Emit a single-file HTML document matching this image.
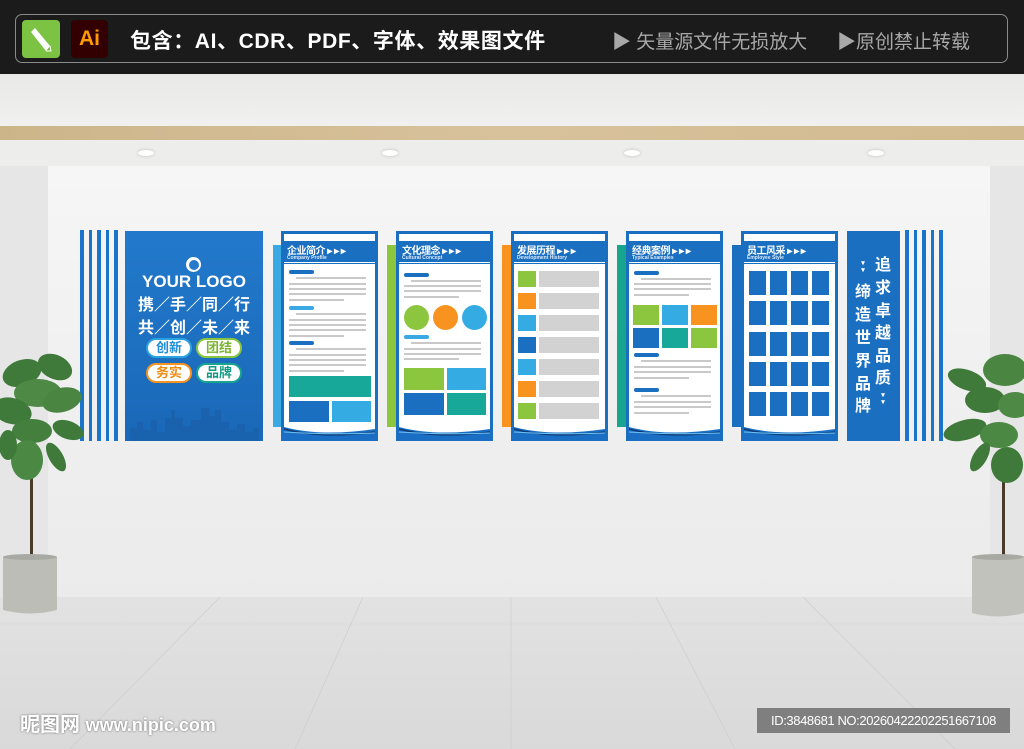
<!DOCTYPE html>
<html><head><meta charset="utf-8"><style>
*{margin:0;padding:0;box-sizing:border-box}
body{width:1024px;height:749px;position:relative;overflow:hidden;background:#ececea;font-family:"Liberation Sans","Noto Sans CJK SC",sans-serif}
.a{position:absolute}
.pn{position:absolute;top:231px;width:97px;height:210px;background:#1b6fc1}
.pn .ts{position:absolute;left:3px;right:3px;top:3px;height:7px;background:#fff}
.pn .hd{position:absolute;left:6px;top:11px;color:#fff;font-weight:bold;font-size:10px;letter-spacing:-0.5px;white-space:nowrap}
.pn .sb{position:absolute;left:6px;top:24px;color:#dfeaf6;font-size:5px;font-weight:bold;white-space:nowrap}
.pn .ct{position:absolute;left:3px;right:3px;top:33px;height:175px;background:#fff;overflow:hidden}
.pn .ln{position:absolute;top:31px;left:3px;right:3px;height:1px;background:#fff}
.g{position:absolute;height:2px;background:#c9c9c9}
.pl{position:absolute;height:4px;border-radius:2px}
.wv{position:absolute;left:0;right:0;bottom:0;height:18px}
.st{position:absolute;top:230px;width:3.5px;height:211px;background:#1b74cc}
.pill{position:absolute;width:46px;height:20px;border-radius:10px;background:#fff;font-size:13px;font-weight:bold;text-align:center;line-height:16px;border:2px solid}
.ch{position:absolute;color:#fff;font-size:16px;font-weight:bold;width:20px;text-align:center;line-height:16px}
</style></head><body>
<!-- top bar -->
<div class="a" style="left:0;top:0;width:1024px;height:74px;background:#1b1b1b"></div>
<div class="a" style="left:15px;top:14px;width:993px;height:49px;border:1.5px solid #8a8a8a;border-radius:7px"></div>
<div class="a" style="left:22px;top:20px;width:38px;height:38px;background:#7cc243;border-radius:4px"></div>
<svg class="a" style="left:22px;top:20px" width="38" height="38"><path d="M9 12 L24 31 L29 31 L28 26 L13 8 Z" fill="#fff"/><path d="M24 31 L29 31 L28 26" fill="#7cc243" stroke="#fff" stroke-width="1"/></svg>
<div class="a" style="left:71px;top:20px;width:37px;height:38px;background:#320000;border-radius:4px;color:#ff9a00;font-size:21px;font-weight:bold;text-align:center;line-height:38px">Ai</div>
<div class="a" style="left:130px;top:25px;color:#fff;font-size:21px;font-weight:bold;white-space:nowrap;letter-spacing:0.6px">包含：AI、CDR、PDF、字体、效果图文件</div>
<div class="a" style="left:612px;top:27px;color:#a8a8a8;font-size:19px;white-space:nowrap">▶ 矢量源文件无损放大</div>
<div class="a" style="left:837px;top:27px;color:#a8a8a8;font-size:19px;white-space:nowrap">▶原创禁止转载</div>
<!-- ceiling -->
<div class="a" style="left:0;top:74px;width:1024px;height:52px;background:linear-gradient(#e9e9e7,#f0f0ee)"></div>
<div class="a" style="left:0;top:126px;width:1024px;height:14px;background:linear-gradient(90deg,#cdb58a,#d8c29c 50%,#d2ba90)"></div>
<div class="a" style="left:0;top:140px;width:1024px;height:26px;background:#ededeb"></div>
<div class="a" style="left:138px;top:150px;width:16px;height:6px;border-radius:50%;background:#fff;box-shadow:0 0 3px #bbb"></div>
<div class="a" style="left:382px;top:150px;width:16px;height:6px;border-radius:50%;background:#fff;box-shadow:0 0 3px #bbb"></div>
<div class="a" style="left:624px;top:150px;width:16px;height:6px;border-radius:50%;background:#fff;box-shadow:0 0 3px #bbb"></div>
<div class="a" style="left:868px;top:150px;width:16px;height:6px;border-radius:50%;background:#fff;box-shadow:0 0 3px #bbb"></div>
<!-- walls -->
<div class="a" style="left:0;top:166px;width:48px;height:432px;background:#e6e6e6"></div>
<div class="a" style="left:990px;top:166px;width:34px;height:432px;background:#e6e6e6"></div>
<div class="a" style="left:48px;top:166px;width:942px;height:432px;background:linear-gradient(#f6f6f6,#f0f0f0 50%,#ebebeb)"></div>
<!-- floor -->
<div class="a" style="left:0;top:597px;width:1024px;height:152px;background:linear-gradient(#e2e2e2,#d9d9d9)"></div>
<svg class="a" style="left:0;top:597px" width="1024" height="152"><g stroke="#cbcbcb" stroke-width="0.6" fill="none"><path d="M220 0 L70 152"/><path d="M363 0 L295 152"/><path d="M511 0 L511 152"/><path d="M656 0 L735 152"/><path d="M803 0 L955 152"/><path d="M0 27 L1024 27" stroke="#d6d6d6"/></g></svg>
<!-- left stripes -->
<div class="st" style="left:80px"></div><div class="st" style="left:88.5px"></div><div class="st" style="left:97px"></div><div class="st" style="left:105.5px"></div><div class="st" style="left:114px"></div>
<!-- logo panel -->
<div class="a" style="left:125px;top:231px;width:138px;height:210px;background:linear-gradient(#2279cb,#1a68b8)"></div>
<svg class="a" style="left:125px;top:380px" width="138" height="61"><path d="M5 61 V48 H12 V42 H18 V50 H26 V40 H32 V52 H40 V38 H46 V30 H50 V38 H58 V46 H66 V40 H76 V28 H84 V36 H90 V30 H96 V42 H104 V50 H112 V44 H120 V52 H128 V48 H134 V61Z" fill="#1a5fa8" opacity=".7"/></svg>
<div class="a" style="left:186px;top:257px;width:15px;height:15px;border-radius:50%;background:#fff"></div>
<div class="a" style="left:188.5px;top:259.5px;width:10px;height:10px;border-radius:50%;background:#2a7acb"></div>
<div class="a" style="left:125px;top:272px;width:138px;text-align:center;color:#fff;font-size:17px;font-weight:bold">YOUR LOGO</div>
<div class="a" style="left:125px;top:291px;width:138px;text-align:center;color:#fff;font-size:16px;font-weight:bold;white-space:nowrap">携／手／同／行</div>
<div class="a" style="left:125px;top:314px;width:138px;text-align:center;color:#fff;font-size:16px;font-weight:bold;white-space:nowrap">共／创／未／来</div>
<div class="pill" style="left:146px;top:338px;border-color:#2aa3e0;color:#1f8dd6">创新</div>
<div class="pill" style="left:196px;top:338px;border-color:#8cc63f;color:#7ab530">团结</div>
<div class="pill" style="left:146px;top:363px;border-color:#f7931e;color:#f08a10">务实</div>
<div class="pill" style="left:196px;top:363px;border-color:#17a58e;color:#139a83">品牌</div>
<!-- side accents -->
<div class="a" style="left:273px;top:245px;width:9px;height:182px;background:#3aa9e3"></div>
<div class="a" style="left:387px;top:245px;width:9px;height:182px;background:#8cc63f"></div>
<div class="a" style="left:502px;top:245px;width:9px;height:182px;background:#f7931e"></div>
<div class="a" style="left:617px;top:245px;width:9px;height:182px;background:#17a58e"></div>
<div class="a" style="left:732px;top:245px;width:9px;height:182px;background:#1b6fc1"></div>

<!-- panel 1 -->
<div class="pn" style="left:281px"><div class="ts"></div><div class="hd">企业简介 ▸ ▸ ▸</div><div class="sb">Company Profile</div><div class="ln"></div>
<div class="ct">
<div class="pl" style="left:5px;top:6px;width:25px;background:#1b6fc1"></div>
<div class="g" style="left:12px;top:13px;width:70px"></div><div class="g" style="left:5px;top:19px;width:77px"></div><div class="g" style="left:5px;top:24px;width:77px"></div><div class="g" style="left:5px;top:29px;width:77px"></div><div class="g" style="left:5px;top:35px;width:55px"></div>
<div class="pl" style="left:5px;top:42px;width:25px;background:#3aa9e3"></div>
<div class="g" style="left:12px;top:49px;width:70px"></div><div class="g" style="left:5px;top:55px;width:77px"></div><div class="g" style="left:5px;top:60px;width:77px"></div><div class="g" style="left:5px;top:65px;width:77px"></div><div class="g" style="left:5px;top:71px;width:55px"></div>
<div class="pl" style="left:5px;top:77px;width:25px;background:#1b6fc1"></div>
<div class="g" style="left:12px;top:84px;width:70px"></div><div class="g" style="left:5px;top:90px;width:77px"></div><div class="g" style="left:5px;top:95px;width:77px"></div><div class="g" style="left:5px;top:100px;width:77px"></div><div class="g" style="left:5px;top:106px;width:55px"></div>
<div class="a" style="left:5px;top:112px;width:82px;height:21px;background:#17a89a"></div>
<div class="a" style="left:5px;top:137px;width:40px;height:21px;background:#1b6fc1"></div>
<div class="a" style="left:48px;top:137px;width:39px;height:21px;background:#35abe3"></div>
</div><svg class="wv" viewBox="0 0 97 18" preserveAspectRatio="none"><path d="M3 4 Q40 14 94 6 V18 H3Z" fill="#1a6fc4"/><path d="M3 6 Q40 16 94 9" stroke="#0d3b78" stroke-width="1.5" fill="none"/><path d="M3 9 Q50 12 94 10" stroke="#6fc1f0" stroke-width="1" fill="none"/></svg></div>

<!-- panel 2 -->
<div class="pn" style="left:396px"><div class="ts"></div><div class="hd">文化理念 ▸ ▸ ▸</div><div class="sb">Cultural Concept</div><div class="ln"></div>
<div class="ct">
<div class="pl" style="left:5px;top:9px;width:25px;background:#1b6fc1"></div>
<div class="g" style="left:12px;top:16px;width:70px"></div><div class="g" style="left:5px;top:21px;width:77px"></div><div class="g" style="left:5px;top:26px;width:77px"></div><div class="g" style="left:5px;top:32px;width:55px"></div>
<div class="a" style="left:5px;top:41px;width:25px;height:25px;border-radius:50%;background:#8cc63f"></div>
<div class="a" style="left:34px;top:41px;width:25px;height:25px;border-radius:50%;background:#f7931e"></div>
<div class="a" style="left:63px;top:41px;width:25px;height:25px;border-radius:50%;background:#35abe3"></div>
<div class="pl" style="left:5px;top:71px;width:25px;background:#3aa9e3"></div>
<div class="g" style="left:12px;top:78px;width:70px"></div><div class="g" style="left:5px;top:84px;width:77px"></div><div class="g" style="left:5px;top:89px;width:77px"></div><div class="g" style="left:5px;top:94px;width:55px"></div>
<div class="a" style="left:5px;top:104px;width:40px;height:22px;background:#8cc63f"></div>
<div class="a" style="left:48px;top:104px;width:39px;height:22px;background:#35abe3"></div>
<div class="a" style="left:5px;top:129px;width:40px;height:22px;background:#1b6fc1"></div>
<div class="a" style="left:48px;top:129px;width:39px;height:22px;background:#17a89a"></div>
</div><svg class="wv" viewBox="0 0 97 18" preserveAspectRatio="none"><path d="M3 4 Q40 14 94 6 V18 H3Z" fill="#1a6fc4"/><path d="M3 6 Q40 16 94 9" stroke="#0d3b78" stroke-width="1.5" fill="none"/><path d="M3 9 Q50 12 94 10" stroke="#6fc1f0" stroke-width="1" fill="none"/></svg></div>

<!-- panel 3 -->
<div class="pn" style="left:511px"><div class="ts"></div><div class="hd">发展历程 ▸ ▸ ▸</div><div class="sb">Development History</div><div class="ln"></div>
<div class="ct">
<div class="a" style="left:4px;top:7px;width:18px;height:16px;background:#8cc63f"></div><div class="a" style="left:25px;top:7px;width:60px;height:16px;background:#d2d2d2"></div>
<div class="a" style="left:4px;top:29px;width:18px;height:16px;background:#f7931e"></div><div class="a" style="left:25px;top:29px;width:60px;height:16px;background:#d2d2d2"></div>
<div class="a" style="left:4px;top:51px;width:18px;height:16px;background:#35abe3"></div><div class="a" style="left:25px;top:51px;width:60px;height:16px;background:#d2d2d2"></div>
<div class="a" style="left:4px;top:73px;width:18px;height:16px;background:#1b6fc1"></div><div class="a" style="left:25px;top:73px;width:60px;height:16px;background:#d2d2d2"></div>
<div class="a" style="left:4px;top:95px;width:18px;height:16px;background:#35abe3"></div><div class="a" style="left:25px;top:95px;width:60px;height:16px;background:#d2d2d2"></div>
<div class="a" style="left:4px;top:117px;width:18px;height:16px;background:#f7931e"></div><div class="a" style="left:25px;top:117px;width:60px;height:16px;background:#d2d2d2"></div>
<div class="a" style="left:4px;top:139px;width:18px;height:16px;background:#8cc63f"></div><div class="a" style="left:25px;top:139px;width:60px;height:16px;background:#d2d2d2"></div>
</div><svg class="wv" viewBox="0 0 97 18" preserveAspectRatio="none"><path d="M3 4 Q40 14 94 6 V18 H3Z" fill="#1a6fc4"/><path d="M3 6 Q40 16 94 9" stroke="#0d3b78" stroke-width="1.5" fill="none"/><path d="M3 9 Q50 12 94 10" stroke="#6fc1f0" stroke-width="1" fill="none"/></svg></div>

<!-- panel 4 -->
<div class="pn" style="left:626px"><div class="ts"></div><div class="hd">经典案例 ▸ ▸ ▸</div><div class="sb">Typical Examples</div><div class="ln"></div>
<div class="ct">
<div class="pl" style="left:5px;top:7px;width:25px;background:#1b6fc1"></div>
<div class="g" style="left:12px;top:14px;width:70px"></div><div class="g" style="left:5px;top:19px;width:77px"></div><div class="g" style="left:5px;top:24px;width:77px"></div><div class="g" style="left:5px;top:30px;width:55px"></div>
<div class="a" style="left:4px;top:41px;width:26px;height:20px;background:#8cc63f"></div><div class="a" style="left:33px;top:41px;width:26px;height:20px;background:#35abe3"></div><div class="a" style="left:62px;top:41px;width:26px;height:20px;background:#f7931e"></div>
<div class="a" style="left:4px;top:64px;width:26px;height:20px;background:#1b6fc1"></div><div class="a" style="left:33px;top:64px;width:26px;height:20px;background:#17a89a"></div><div class="a" style="left:62px;top:64px;width:26px;height:20px;background:#8cc63f"></div>
<div class="pl" style="left:5px;top:89px;width:25px;background:#1b6fc1"></div>
<div class="g" style="left:12px;top:96px;width:70px"></div><div class="g" style="left:5px;top:102px;width:77px"></div><div class="g" style="left:5px;top:107px;width:77px"></div><div class="g" style="left:5px;top:113px;width:55px"></div>
<div class="pl" style="left:5px;top:124px;width:25px;background:#1b6fc1"></div>
<div class="g" style="left:12px;top:131px;width:70px"></div><div class="g" style="left:5px;top:137px;width:77px"></div><div class="g" style="left:5px;top:142px;width:77px"></div><div class="g" style="left:5px;top:148px;width:55px"></div>
</div><svg class="wv" viewBox="0 0 97 18" preserveAspectRatio="none"><path d="M3 4 Q40 14 94 6 V18 H3Z" fill="#1a6fc4"/><path d="M3 6 Q40 16 94 9" stroke="#0d3b78" stroke-width="1.5" fill="none"/><path d="M3 9 Q50 12 94 10" stroke="#6fc1f0" stroke-width="1" fill="none"/></svg></div>

<!-- panel 5 -->
<div class="pn" style="left:741px"><div class="ts"></div><div class="hd">员工风采 ▸ ▸ ▸</div><div class="sb">Employee Style</div><div class="ln"></div>
<div class="ct" id="grid"></div><svg class="wv" viewBox="0 0 97 18" preserveAspectRatio="none"><path d="M3 4 Q40 14 94 6 V18 H3Z" fill="#1a6fc4"/><path d="M3 6 Q40 16 94 9" stroke="#0d3b78" stroke-width="1.5" fill="none"/><path d="M3 9 Q50 12 94 10" stroke="#6fc1f0" stroke-width="1" fill="none"/></svg></div>

<!-- right panel -->
<div class="a" style="left:847px;top:231px;width:53px;height:210px;background:#1b6fc1"></div>
<div class="ch" style="left:873px;top:258px">追</div><div class="ch" style="left:873px;top:281px">求</div><div class="ch" style="left:873px;top:304px">卓</div><div class="ch" style="left:873px;top:326px">越</div><div class="ch" style="left:873px;top:349px">品</div><div class="ch" style="left:873px;top:371px">质</div>
<div class="ch" style="left:873px;top:392px;font-size:7px;line-height:7px">▾<br>▾</div>
<div class="ch" style="left:853px;top:260px;font-size:7px;line-height:7px">▾<br>▾</div>
<div class="ch" style="left:853px;top:285px">缔</div><div class="ch" style="left:853px;top:308px">造</div><div class="ch" style="left:853px;top:331px">世</div><div class="ch" style="left:853px;top:354px">界</div><div class="ch" style="left:853px;top:377px">品</div><div class="ch" style="left:853px;top:399px">牌</div>
<div class="st" style="left:905px"></div><div class="st" style="left:913.5px"></div><div class="st" style="left:922px"></div><div class="st" style="left:930.5px"></div><div class="st" style="left:939px"></div>

<!-- plants -->
<svg class="a" style="left:0;top:345px" width="100" height="275">
<rect x="30" y="100" width="3" height="115" fill="#4a3a2a"/>
<g fill="#3f7a3a">
<ellipse cx="22" cy="28" rx="20" ry="13" transform="rotate(-20 22 28)"/><ellipse cx="55" cy="22" rx="18" ry="12" transform="rotate(25 55 22)"/>
<ellipse cx="38" cy="48" rx="24" ry="14" fill="#4e8a45"/><ellipse cx="12" cy="66" rx="20" ry="13" transform="rotate(15 12 66)"/>
<ellipse cx="62" cy="55" rx="20" ry="12" transform="rotate(-15 62 55)" fill="#4a8542"/><ellipse cx="32" cy="86" rx="20" ry="12" fill="#447f3e"/>
<ellipse cx="68" cy="85" rx="16" ry="9" transform="rotate(20 68 85)"/><ellipse cx="27" cy="115" rx="16" ry="20" fill="#4b8843"/>
<ellipse cx="56" cy="112" rx="7" ry="16" transform="rotate(-30 56 112)"/><ellipse cx="8" cy="100" rx="9" ry="15"/>
</g>
<path d="M3 212 H57 V265 Q30 272 3 265Z" fill="#bdbdb8"/><ellipse cx="30" cy="212" rx="27" ry="3" fill="#a9a9a4"/>
</svg>
<svg class="a" style="left:935px;top:345px" width="89" height="275">
<rect x="67" y="120" width="3" height="95" fill="#4a3a2a"/>
<g fill="#3f7a3a">
<ellipse cx="32" cy="35" rx="20" ry="10" transform="rotate(20 32 35)"/><ellipse cx="70" cy="25" rx="22" ry="16" fill="#4a8542"/>
<ellipse cx="50" cy="55" rx="20" ry="13"/><ellipse cx="80" cy="60" rx="17" ry="13" fill="#4e8a45"/>
<ellipse cx="30" cy="85" rx="22" ry="10" transform="rotate(-15 30 85)"/><ellipse cx="64" cy="90" rx="19" ry="13" fill="#4b8843"/>
<ellipse cx="72" cy="120" rx="16" ry="18"/><ellipse cx="45" cy="112" rx="7" ry="16" transform="rotate(30 45 112)"/>
</g>
<path d="M37 212 H89 V268 Q63 275 37 268Z" fill="#c2c2bd"/><ellipse cx="63" cy="212" rx="26" ry="3" fill="#a9a9a4"/>
</svg>

<!-- watermarks -->
<div class="a" style="left:20px;top:708px;color:#fff;font-size:20px;font-weight:bold;white-space:nowrap;text-shadow:0 0 2px #666">昵图网 <span style="font-size:18px">www.nipic.com</span></div>
<div class="a" style="left:757px;top:708px;width:253px;height:25px;background:rgba(110,110,110,.85);color:#fff;font-size:13px;line-height:25px;text-align:center;white-space:nowrap;letter-spacing:-0.4px">ID:3848681 NO:20260422202251667108</div>
<script>
var g=document.getElementById('grid'),h='';
for(var r=0;r<5;r++)for(var c=0;c<4;c++)h+='<div class="a" style="left:'+(5+c*21)+'px;top:'+(7+r*30.3)+'px;width:17px;height:24px;background:#1b6fc1"></div>';
g.innerHTML=h;
</script>
</body></html>
